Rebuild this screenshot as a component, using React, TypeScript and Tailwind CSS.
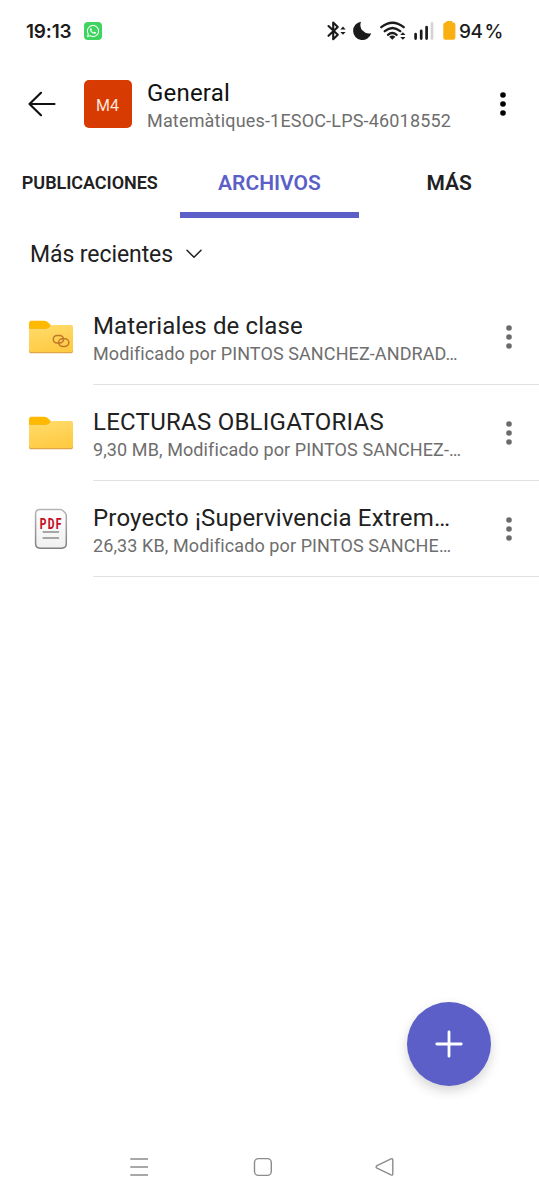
import React from "react";
import { FaWhatsapp } from "react-icons/fa";

function StatusBar() {
  return (
    <div className="flex h-[62px] items-center pl-[26px] text-[#1b1b1b]">
      <span className="w-[58px] whitespace-nowrap pt-[2px] font-['Inter'] text-[19px] font-semibold tracking-[-0.2px]">19:13</span>
      <span className="flex size-[18px] items-center justify-center rounded-[4px] bg-[#3fd45f] text-white">
        <FaWhatsapp size={14} />
      </span>
      <svg className="ml-[224px]" width="178" height="24" viewBox="326 19 178 24" fill="none" stroke="#1b1b1b">
        <path d="M328.5 26 L337.8 34.8 L333.2 39.2 V22.6 L337.8 26.9 L328.5 35.8" strokeWidth="2.1" strokeLinejoin="round" strokeLinecap="round" />
        <path d="M340.3 29.4 L343 26.6 L345.6 29.4Z M340.3 31.9 H345.6 L343 34.7Z" fill="#1b1b1b" stroke="none" />
        <path d="M361 21.7 A9.2 9.2 0 1 0 371.2 33.2 A8.6 8.6 0 0 1 361 21.7Z" fill="#1b1b1b" stroke="none" />
        <path d="M381.3 27.2 Q392.5 18.2 403.7 27.2 M384.8 31.2 Q392.5 24.7 400.2 31.2 M388 34.8 Q392.3 31.3 396.6 34.8" strokeWidth="2.3" strokeLinecap="round" />
        <path d="M389.2 36.7 Q392.3 34.5 395.4 36.7 L392.3 39.8Z" fill="#1b1b1b" stroke="none" />
        <path d="M400.2 35 L402.9 32.3 L405.5 35Z M400.2 37.1 H405.5 L402.9 39.8Z" fill="#1b1b1b" stroke="none" />
        <path d="M415.6 34.2 V38.6 M421.2 30.9 V38.6 M426.6 27.2 V38.6" strokeWidth="2.7" strokeLinecap="round" />
        <path d="M432 23.4 V38.6" stroke="#d4d4d4" strokeWidth="2.7" strokeLinecap="round" />
        <path d="M447.2 21 H451.4 Q452.4 21 452.7 22.4 H453.2 Q455.4 22.4 455.4 24.6 V37.6 Q455.4 39.8 453.2 39.8 H445.5 Q443.3 39.8 443.3 37.6 V24.6 Q443.3 22.4 445.5 22.4 H446 Q446.3 21 447.2 21Z" fill="#f8b012" stroke="none" />
      </svg>
      <span className="-ml-[45px] whitespace-nowrap pt-[2px] font-['Inter'] text-[19px] font-medium tracking-[-0.5px] [word-spacing:-2.5px]">94 %</span>
    </div>
  );
}

function Dots({ color }: { color: string }) {
  return (
    <svg width="8" height="26" viewBox="0 0 8 26" fill={color}>
      <circle cx="4" cy="4" r="2.8" />
      <circle cx="4" cy="13" r="2.8" />
      <circle cx="4" cy="22" r="2.8" />
    </svg>
  );
}

function Folder({ linked }: { linked?: boolean }) {
  return (
    <svg width="46" height="34" viewBox="0 0 46 34" fill="none">
      <defs>
        <linearGradient id="folder" x1="0" y1="0" x2="0.3" y2="1">
          <stop stopColor="#ffdc6c" />
          <stop offset="1" stopColor="#ffcb45" />
        </linearGradient>
      </defs>
      <path d="M1 6H43Q45 6 45 8V31.2Q45 33.2 43 33.2H3Q1 33.2 1 31.2Z" fill="#d79a42" />
      <path d="M1 8.5H18Q20 8.5 21.5 6.8Q23 5 25 5H43Q45 5 45 7V30.2Q45 32.2 43 32.2H3Q1 32.2 1 30.2Z" fill="url(#folder)" />
      <path d="M1 3.2Q1 .7 3.5 .7H16Q18 .7 19.4 2L23 5Q20.5 8.8 17.5 8.8H1Z" fill="#ffb900" />
      {linked && (
        <g stroke="#c2762b" strokeWidth="1.5">
          <rect x="25.3" y="15.5" width="10.2" height="7.6" rx="3.8" />
          <rect x="30.6" y="18.8" width="10.2" height="7.6" rx="3.8" />
        </g>
      )}
    </svg>
  );
}

function Pdf() {
  return (
    <svg width="34" height="42" viewBox="34 508 34 42" fill="none">
      <defs>
        <linearGradient id="page" x1="0" y1="0" x2="0" y2="1">
          <stop stopColor="#fff" />
          <stop offset="1" stopColor="#f0f0f0" />
        </linearGradient>
        <linearGradient id="edge" x1="0" y1="0" x2="0" y2="1">
          <stop stopColor="#b5b5b5" />
          <stop offset="1" stopColor="#808080" />
        </linearGradient>
      </defs>
      <path d="M40 509.5H60Q62 509.5 63.3 510.9L65.1 512.8Q66.3 514 66.3 516V543.6Q66.3 548.2 61.7 548.2H40Q35.6 548.2 35.6 543.6V514Q35.6 509.5 40 509.5Z" fill="url(#page)" stroke="url(#edge)" strokeWidth="1.5" />
      <text transform="translate(39.8 528.7) scale(0.74 1)" letterSpacing="1.7" fill="#c50f1f" fontFamily="Roboto" fontWeight="800" fontSize="14">PDF</text>
      <path d="M43.4 532H58.4M43.4 538H58.4" stroke="#8c8c8c" strokeWidth="1.7" strokeLinecap="round" />
    </svg>
  );
}

type RowProps = {
  icon: React.ReactNode;
  title: string;
  titleClass: string;
  detail: string;
};

function FileRow({ icon, title, titleClass, detail }: RowProps) {
  return (
    <li className="flex h-24">
      <div className="flex w-[93px] items-center pl-[28px]">{icon}</div>
      <div className="flex flex-1 border-b border-[#e1e1e1]">
        <div className="w-[412px] whitespace-nowrap pt-[23px]">
          <p className={"text-[24px] leading-[28px] text-[#212121] " + titleClass}>{title}</p>
          <p className="text-[18px] leading-[27px] tracking-[0.1px] text-[#6e6e6e]">{detail}</p>
        </div>
        <button className="flex items-center pt-px" aria-label="Más opciones"><Dots color="#6b6b6b" /></button>
      </div>
    </li>
  );
}

export default function App() {
  return (
    <div className="flex h-[1200px] w-[539px] flex-col overflow-hidden bg-white font-['Roboto',sans-serif]">
      <StatusBar />
      <header className="flex h-[84px]">
        <button className="flex w-[84px] items-center pl-[27px]" aria-label="Atrás">
          <svg width="30" height="28" viewBox="0 0 30 28" fill="none" stroke="#111" strokeWidth="2.2" strokeLinecap="round" strokeLinejoin="round">
            <path d="M27.5 14H2.5M14 2.8L2.5 14L14 25.2" />
          </svg>
        </button>
        <div className="mt-[18px] flex size-12 items-center justify-center rounded-[5px] bg-[#d83b01] pr-px pt-[3px] text-[16px] text-[#fbe4da]">M4</div>
        <div className="w-[367px] whitespace-nowrap pl-[15px] pt-[17px]">
          <h1 className="text-[24px] leading-[28px] tracking-[0.2px] text-[#111]">General</h1>
          <p className="text-[18px] leading-[28px] tracking-[0.18px] text-[#6e6e6e]">Matemàtiques-1ESOC-LPS-46018552</p>
        </div>
        <button className="flex items-center" aria-label="Opciones"><Dots color="#000" /></button>
      </header>
      <nav className="grid h-[72px] grid-cols-3 whitespace-nowrap text-center font-semibold leading-[74px] text-[#212121]">
        <span className="text-[18px] tracking-[-0.05px]">PUBLICACIONES</span>
        <span className="h-[72px] border-b-[6px] border-[#5b5fc7] text-[21px] text-[#5b5fc7]">ARCHIVOS</span>
        <span className="text-[21px]">MÁS</span>
      </nav>
      <div className="flex h-[71px] items-center pl-[30px] text-[#212121]">
        <span className="w-[156px] whitespace-nowrap pt-[3px] text-[23px] tracking-[-0.08px]">Más recientes</span>
        <svg className="mt-px" width="16" height="10" viewBox="0 0 16 10" fill="none" stroke="#212121" strokeWidth="1.5" strokeLinecap="round" strokeLinejoin="round">
          <path d="M1 1.2L8 8.3L15 1.2" />
        </svg>
      </div>
      <ul>
        <FileRow icon={<Folder linked />} title="Materiales de clase" titleClass="tracking-[0.13px]" detail="Modificado por PINTOS SANCHEZ-ANDRAD…" />
        <FileRow icon={<Folder />} title="LECTURAS OBLIGATORIAS" titleClass="tracking-[0.25px]" detail="9,30 MB, Modificado por PINTOS SANCHEZ-…" />
        <FileRow icon={<div className="pl-[6px]"><Pdf /></div>} title="Proyecto ¡Supervivencia Extrem…" titleClass="tracking-[0.18px]" detail="26,33 KB, Modificado por PINTOS SANCHE…" />
      </ul>
      <div className="mt-auto flex justify-end pr-12">
        <button className="flex size-[84px] items-center justify-center rounded-full bg-[#5b5fc7] shadow-[0_5px_12px_rgba(0,0,0,0.17)]" aria-label="Añadir">
          <svg width="28" height="28" viewBox="0 0 28 28" stroke="#fff" strokeWidth="2.8" strokeLinecap="round">
            <path d="M14 1.8V26.2M1.8 14H26.2" />
          </svg>
        </button>
      </div>
      <div className="mt-[47px] flex h-[67px] pt-[24px]">
        <svg width="539" height="20" viewBox="0 1157 539 20" fill="none" stroke="#8c8c8c" strokeWidth="1.4" strokeLinejoin="round">
          <path d="M130.3 1159H148M130.3 1167H148M130.3 1175H148" />
          <rect x="254.5" y="1158.6" width="16.8" height="16.8" rx="4" />
          <path d="M377 1165.6L391 1158.9Q392.8 1158.2 392.8 1160V1174Q392.8 1175.6 391 1174.9L377 1168.2Q375.2 1167 377 1165.6Z" />
        </svg>
      </div>
    </div>
  );
}
